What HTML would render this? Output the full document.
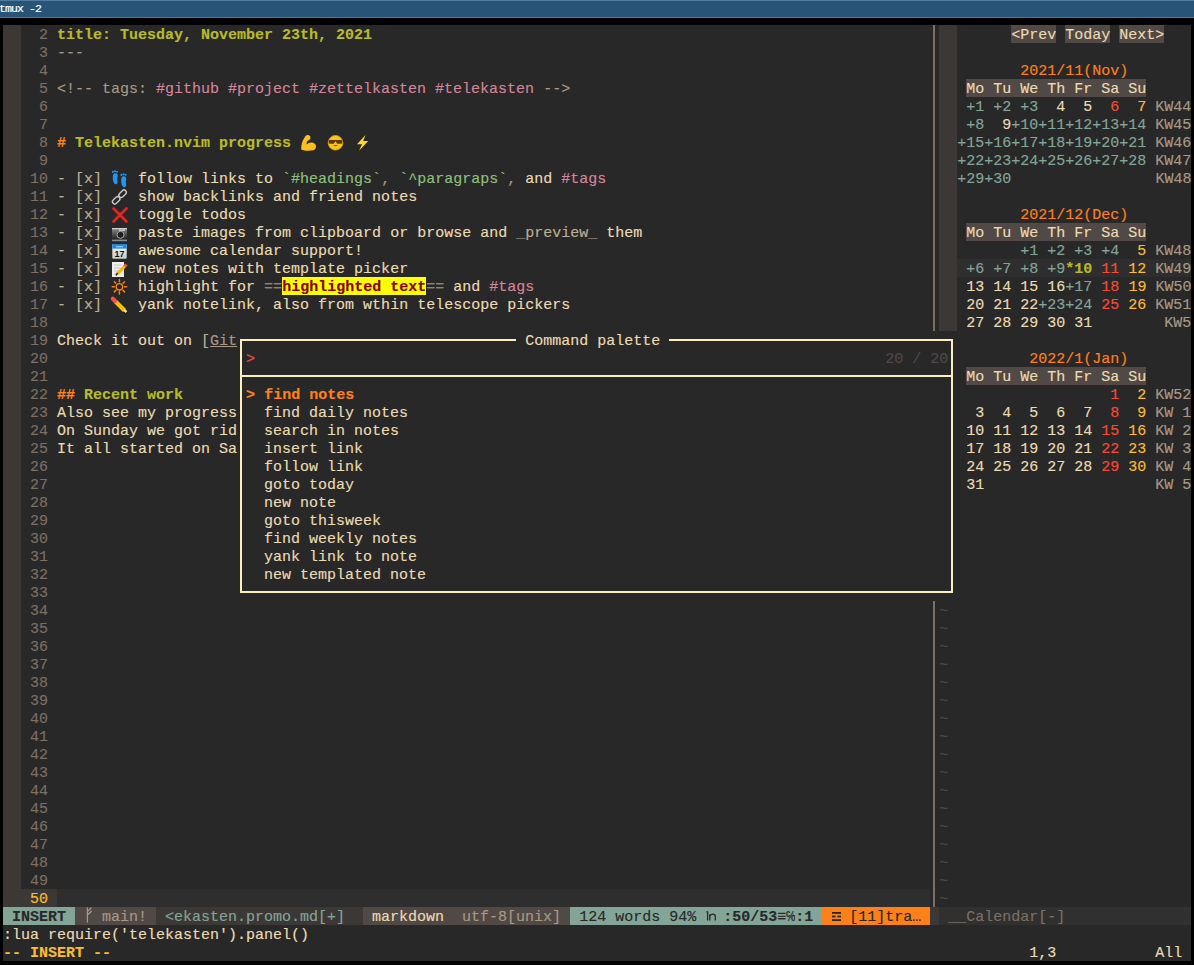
<!DOCTYPE html>
<html><head><meta charset="utf-8"><style>
html,body{margin:0;padding:0}
body{width:1194px;height:965px;background:#000;overflow:hidden;position:relative;font-family:"Liberation Mono",monospace}
#tb{position:absolute;left:0;top:0;width:1194px;height:18px;background:#285478;border-top:1px solid #4f7ba0;border-bottom:1px solid #4a77a0;box-sizing:border-box}
#tb span{position:absolute;left:-1px;top:1px;font:11.5px/14px "Liberation Mono",monospace;color:#fff;letter-spacing:-0.9px;-webkit-text-stroke:0.2px #fff}
#t{position:absolute;left:3px;top:25px;width:1188px;height:936px;background:#282828;color:#ebdbb2;font-size:15px;-webkit-text-stroke:0.15px currentColor}
.r{position:absolute;left:0;height:18px;line-height:22px;white-space:pre;width:1188px}
.r span{display:inline-block;height:18px;vertical-align:top}
.o{position:absolute}
</style></head><body>
<div id="tb"><span>tmux -2</span></div>
<div id="t">
<div class="r" style="top:0px"><span style="background:#3c3836">  </span><span style="color:#7c6f64">  2 </span><span style="color:#b8bb26;font-weight:bold">title: Tuesday, November 23th, 2021</span>                                                              <span style="color:#7c6f64"> </span><span style="background:#3c3836">  </span>      <span style="background:#504945">&lt;Prev</span> <span style="background:#504945">Today</span> <span style="background:#504945">Next&gt;</span>   </div>
<div class="r" style="top:18px"><span style="background:#3c3836">  </span><span style="color:#7c6f64">  3 </span><span style="color:#a89984">---</span>                                                                                              <span style="color:#7c6f64"> </span><span style="background:#3c3836">  </span>                          </div>
<div class="r" style="top:36px"><span style="background:#3c3836">  </span><span style="color:#7c6f64">  4 </span>                                                                                                 <span style="color:#7c6f64"> </span><span style="background:#3c3836">  </span>       <span style="color:#fe8019">2021/11(Nov)</span>       </div>
<div class="r" style="top:54px"><span style="background:#3c3836">  </span><span style="color:#7c6f64">  5 </span><span style="color:#a89984">&lt;!-- tags: </span><span style="color:#d3869b">#github #project #zettelkasten #telekasten</span><span style="color:#a89984"> --&gt;</span>                                        <span style="color:#7c6f64"> </span><span style="background:#3c3836">  </span> <span style="background:#504945">Mo Tu We Th Fr Sa Su</span>     </div>
<div class="r" style="top:72px"><span style="background:#3c3836">  </span><span style="color:#7c6f64">  6 </span>                                                                                                 <span style="color:#7c6f64"> </span><span style="background:#3c3836">  </span><span style="color:#83a598"> +1 +2 +3</span>  4  5<span style="color:#fb4934">  6</span><span style="color:#fabd2f">  7</span><span style="color:#a89984"> KW44</span></div>
<div class="r" style="top:90px"><span style="background:#3c3836">  </span><span style="color:#7c6f64">  7 </span>                                                                                                 <span style="color:#7c6f64"> </span><span style="background:#3c3836">  </span><span style="color:#83a598"> +8</span>  9<span style="color:#83a598">+10+11+12+13+14</span><span style="color:#a89984"> KW45</span></div>
<div class="r" style="top:108px"><span style="background:#3c3836">  </span><span style="color:#7c6f64">  8 </span><span style="color:#fe8019;font-weight:bold">#</span> <span style="color:#b8bb26;font-weight:bold">Telekasten.nvim progress</span>                                                                       <span style="color:#7c6f64"> </span><span style="background:#3c3836">  </span><span style="color:#83a598">+15+16+17+18+19+20+21</span><span style="color:#a89984"> KW46</span></div>
<div class="r" style="top:126px"><span style="background:#3c3836">  </span><span style="color:#7c6f64">  9 </span>                                                                                                 <span style="color:#7c6f64"> </span><span style="background:#3c3836">  </span><span style="color:#83a598">+22+23+24+25+26+27+28</span><span style="color:#a89984"> KW47</span></div>
<div class="r" style="top:144px"><span style="background:#3c3836">  </span><span style="color:#7c6f64"> 10 </span><span style="color:#bdae93">-</span> <span style="color:#bdae93">[x]</span>    follow links to <span style="color:#8ec07c">`#headings`</span><span style="color:#a89984">, </span><span style="color:#8ec07c">`^paragraps`</span><span style="color:#a89984">, </span>and <span style="color:#d3869b">#tags</span>                                    <span style="color:#7c6f64"> </span><span style="background:#3c3836">  </span><span style="color:#83a598">+29+30</span>               <span style="color:#a89984"> KW48</span></div>
<div class="r" style="top:162px"><span style="background:#3c3836">  </span><span style="color:#7c6f64"> 11 </span><span style="color:#bdae93">-</span> <span style="color:#bdae93">[x]</span>    show backlinks and friend notes                                                         <span style="color:#7c6f64"> </span><span style="background:#3c3836">  </span>                          </div>
<div class="r" style="top:180px"><span style="background:#3c3836">  </span><span style="color:#7c6f64"> 12 </span><span style="color:#bdae93">-</span> <span style="color:#bdae93">[x]</span>    toggle todos                                                                            <span style="color:#7c6f64"> </span><span style="background:#3c3836">  </span>       <span style="color:#fe8019">2021/12(Dec)</span>       </div>
<div class="r" style="top:198px"><span style="background:#3c3836">  </span><span style="color:#7c6f64"> 13 </span><span style="color:#bdae93">-</span> <span style="color:#bdae93">[x]</span>    paste images from clipboard or browse and <span style="color:#928374">_</span><span style="color:#bdae93">preview</span><span style="color:#928374">_</span> them                                <span style="color:#7c6f64"> </span><span style="background:#3c3836">  </span> <span style="background:#504945">Mo Tu We Th Fr Sa Su</span>     </div>
<div class="r" style="top:216px"><span style="background:#3c3836">  </span><span style="color:#7c6f64"> 14 </span><span style="color:#bdae93">-</span> <span style="color:#bdae93">[x]</span>    awesome calendar support!                                                               <span style="color:#7c6f64"> </span><span style="background:#3c3836">  </span>      <span style="color:#83a598"> +1 +2 +3 +4</span><span style="color:#fabd2f">  5</span><span style="color:#a89984"> KW48</span></div>
<div class="r" style="top:234px"><span style="background:#3c3836">  </span><span style="color:#7c6f64"> 15 </span><span style="color:#bdae93">-</span> <span style="color:#bdae93">[x]</span>    new notes with template picker                                                          <span style="color:#7c6f64"> </span><span style="background:#3c3836">  </span><span style="color:#83a598;background:#2e2e2e"> +6 +7 +8 +9</span><span style="color:#b8bb26;background:#2e2e2e;font-weight:bold">*10</span><span style="color:#fb4934;background:#2e2e2e"> 11</span><span style="color:#fabd2f;background:#2e2e2e"> 12</span><span style="color:#a89984;background:#2e2e2e"> KW49</span></div>
<div class="r" style="top:252px"><span style="background:#3c3836">  </span><span style="color:#7c6f64"> 16 </span><span style="color:#bdae93">-</span> <span style="color:#bdae93">[x]</span>    highlight for <span style="color:#928374">==</span><span style="color:#8b0000;background:#ffff00;font-weight:bold">highlighted text</span><span style="color:#928374">==</span> and <span style="color:#d3869b">#tags</span>                                            <span style="color:#7c6f64"> </span><span style="background:#3c3836">  </span> 13 14 15 16<span style="color:#83a598">+17</span><span style="color:#fb4934"> 18</span><span style="color:#fabd2f"> 19</span><span style="color:#a89984"> KW50</span></div>
<div class="r" style="top:270px"><span style="background:#3c3836">  </span><span style="color:#7c6f64"> 17 </span><span style="color:#bdae93">-</span> <span style="color:#bdae93">[x]</span>    yank notelink, also from wthin telescope pickers                                        <span style="color:#7c6f64"> </span><span style="background:#3c3836">  </span> 20 21 22<span style="color:#83a598">+23+24</span><span style="color:#fb4934"> 25</span><span style="color:#fabd2f"> 26</span><span style="color:#a89984"> KW51</span></div>
<div class="r" style="top:288px"><span style="background:#3c3836">  </span><span style="color:#7c6f64"> 18 </span>                                                                                                 <span style="color:#7c6f64"> </span><span style="background:#3c3836">  </span> 27 28 29 30 31       <span style="color:#a89984"> KW5</span></div>
<div class="r" style="top:306px"><span style="background:#3c3836">  </span><span style="color:#7c6f64"> 19 </span>Check it out on <span style="color:#bdae93">[</span><span style="color:#a89984;text-decoration:underline">Git</span>                                Command palette                                                           </div>
<div class="r" style="top:324px"><span style="background:#3c3836">  </span><span style="color:#7c6f64"> 20 </span>                     <span style="color:#fb4934">&gt;</span>                                                                      <span style="color:#504945">20 / 20</span>         <span style="color:#fe8019">2022/1(Jan)</span>       </div>
<div class="r" style="top:342px"><span style="background:#3c3836">  </span><span style="color:#7c6f64"> 21 </span>                                                                                                     <span style="background:#504945">Mo Tu We Th Fr Sa Su</span>     </div>
<div class="r" style="top:360px"><span style="background:#3c3836">  </span><span style="color:#7c6f64"> 22 </span><span style="color:#fe8019;font-weight:bold">##</span> <span style="color:#b8bb26;font-weight:bold">Recent work</span>       <span style="color:#fe8019;font-weight:bold">&gt;</span> <span style="color:#fe8019;font-weight:bold">find notes</span>                                                                                  <span style="color:#fb4934">  1</span><span style="color:#fabd2f">  2</span><span style="color:#a89984"> KW52</span></div>
<div class="r" style="top:378px"><span style="background:#3c3836">  </span><span style="color:#7c6f64"> 23 </span>Also see my progress   find daily notes                                                               3  4  5  6  7<span style="color:#fb4934">  8</span><span style="color:#fabd2f">  9</span><span style="color:#a89984"> KW 1</span></div>
<div class="r" style="top:396px"><span style="background:#3c3836">  </span><span style="color:#7c6f64"> 24 </span>On Sunday we got rid   search in notes                                                               10 11 12 13 14<span style="color:#fb4934"> 15</span><span style="color:#fabd2f"> 16</span><span style="color:#a89984"> KW 2</span></div>
<div class="r" style="top:414px"><span style="background:#3c3836">  </span><span style="color:#7c6f64"> 25 </span>It all started on Sa   insert link                                                                   17 18 19 20 21<span style="color:#fb4934"> 22</span><span style="color:#fabd2f"> 23</span><span style="color:#a89984"> KW 3</span></div>
<div class="r" style="top:432px"><span style="background:#3c3836">  </span><span style="color:#7c6f64"> 26 </span>                       follow link                                                                   24 25 26 27 28<span style="color:#fb4934"> 29</span><span style="color:#fabd2f"> 30</span><span style="color:#a89984"> KW 4</span></div>
<div class="r" style="top:450px"><span style="background:#3c3836">  </span><span style="color:#7c6f64"> 27 </span>                       goto today                                                                    31                  <span style="color:#a89984"> KW 5</span></div>
<div class="r" style="top:468px"><span style="background:#3c3836">  </span><span style="color:#7c6f64"> 28 </span>                       new note                                                                                               </div>
<div class="r" style="top:486px"><span style="background:#3c3836">  </span><span style="color:#7c6f64"> 29 </span>                       goto thisweek                                                                                          </div>
<div class="r" style="top:504px"><span style="background:#3c3836">  </span><span style="color:#7c6f64"> 30 </span>                       find weekly notes                                                                                      </div>
<div class="r" style="top:522px"><span style="background:#3c3836">  </span><span style="color:#7c6f64"> 31 </span>                       yank link to note                                                                                      </div>
<div class="r" style="top:540px"><span style="background:#3c3836">  </span><span style="color:#7c6f64"> 32 </span>                       new templated note                                                                                     </div>
<div class="r" style="top:558px"><span style="background:#3c3836">  </span><span style="color:#7c6f64"> 33 </span>                                                                                                                              </div>
<div class="r" style="top:576px"><span style="background:#3c3836">  </span><span style="color:#7c6f64"> 34 </span>                                                                                                 <span style="color:#7c6f64"> </span><span style="color:#504945">~</span>                           </div>
<div class="r" style="top:594px"><span style="background:#3c3836">  </span><span style="color:#7c6f64"> 35 </span>                                                                                                 <span style="color:#7c6f64"> </span><span style="color:#504945">~</span>                           </div>
<div class="r" style="top:612px"><span style="background:#3c3836">  </span><span style="color:#7c6f64"> 36 </span>                                                                                                 <span style="color:#7c6f64"> </span><span style="color:#504945">~</span>                           </div>
<div class="r" style="top:630px"><span style="background:#3c3836">  </span><span style="color:#7c6f64"> 37 </span>                                                                                                 <span style="color:#7c6f64"> </span><span style="color:#504945">~</span>                           </div>
<div class="r" style="top:648px"><span style="background:#3c3836">  </span><span style="color:#7c6f64"> 38 </span>                                                                                                 <span style="color:#7c6f64"> </span><span style="color:#504945">~</span>                           </div>
<div class="r" style="top:666px"><span style="background:#3c3836">  </span><span style="color:#7c6f64"> 39 </span>                                                                                                 <span style="color:#7c6f64"> </span><span style="color:#504945">~</span>                           </div>
<div class="r" style="top:684px"><span style="background:#3c3836">  </span><span style="color:#7c6f64"> 40 </span>                                                                                                 <span style="color:#7c6f64"> </span><span style="color:#504945">~</span>                           </div>
<div class="r" style="top:702px"><span style="background:#3c3836">  </span><span style="color:#7c6f64"> 41 </span>                                                                                                 <span style="color:#7c6f64"> </span><span style="color:#504945">~</span>                           </div>
<div class="r" style="top:720px"><span style="background:#3c3836">  </span><span style="color:#7c6f64"> 42 </span>                                                                                                 <span style="color:#7c6f64"> </span><span style="color:#504945">~</span>                           </div>
<div class="r" style="top:738px"><span style="background:#3c3836">  </span><span style="color:#7c6f64"> 43 </span>                                                                                                 <span style="color:#7c6f64"> </span><span style="color:#504945">~</span>                           </div>
<div class="r" style="top:756px"><span style="background:#3c3836">  </span><span style="color:#7c6f64"> 44 </span>                                                                                                 <span style="color:#7c6f64"> </span><span style="color:#504945">~</span>                           </div>
<div class="r" style="top:774px"><span style="background:#3c3836">  </span><span style="color:#7c6f64"> 45 </span>                                                                                                 <span style="color:#7c6f64"> </span><span style="color:#504945">~</span>                           </div>
<div class="r" style="top:792px"><span style="background:#3c3836">  </span><span style="color:#7c6f64"> 46 </span>                                                                                                 <span style="color:#7c6f64"> </span><span style="color:#504945">~</span>                           </div>
<div class="r" style="top:810px"><span style="background:#3c3836">  </span><span style="color:#7c6f64"> 47 </span>                                                                                                 <span style="color:#7c6f64"> </span><span style="color:#504945">~</span>                           </div>
<div class="r" style="top:828px"><span style="background:#3c3836">  </span><span style="color:#7c6f64"> 48 </span>                                                                                                 <span style="color:#7c6f64"> </span><span style="color:#504945">~</span>                           </div>
<div class="r" style="top:846px"><span style="background:#3c3836">  </span><span style="color:#7c6f64"> 49 </span>                                                                                                 <span style="color:#7c6f64"> </span><span style="color:#504945">~</span>                           </div>
<div class="r" style="top:864px"><span style="background:#3c3836">  </span><span style="color:#fabd2f;background:#3c3836"> 50 </span><span style="background:#2e2e2e">                                                                                                 </span><span style="color:#7c6f64"> </span><span style="color:#504945">~</span>                           </div>
<div class="r" style="top:882px"><span style="color:#282828;background:#83a598;font-weight:bold"> INSERT </span><span style="color:#a89984;background:#504945">   main! </span><span style="color:#83a598;background:#3c3836"> &lt;ekasten.promo.md[+]  </span><span style="background:#504945"> markdown  </span><span style="color:#a89984;background:#504945">utf-8[unix] </span><span style="color:#282828;background:#83a598"> 124 words 94%   </span><span style="color:#282828;background:#83a598;font-weight:bold">:50/53</span><span style="color:#282828;background:#83a598">≡℅</span><span style="color:#282828;background:#83a598;font-weight:bold">:1</span><span style="color:#282828;background:#83a598"> </span><span style="color:#282828;background:#fe8019">   [11]tra… </span><span style="background:#3c3836"> </span><span style="color:#7c6f64;background:#303030"> __Calendar[-]              </span></div>
<div class="r" style="top:900px">:lua require('telekasten').panel()                                                                                                  </div>
<div class="r" style="top:918px"><span style="color:#fabd2f;font-weight:bold">-- INSERT --</span>                                                                                                      1,3           All </div>
<div class="o" style="left:930px;top:0;width:2px;height:306px;background:#7c6f64"></div>
<div class="o" style="left:930px;top:576px;width:2px;height:306px;background:#7c6f64"></div>
<div class="o" style="left:237px;top:314px;width:276px;height:2px;background:#fbefc2"></div>
<div class="o" style="left:666px;top:314px;width:284px;height:2px;background:#fbefc2"></div>
<div class="o" style="left:237px;top:314px;width:2px;height:254px;background:#fbefc2"></div>
<div class="o" style="left:948px;top:314px;width:2px;height:254px;background:#fbefc2"></div>
<div class="o" style="left:237px;top:566px;width:713px;height:2px;background:#fbefc2"></div>
<div class="o" style="left:237px;top:350px;width:713px;height:2px;background:#fbefc2"></div>

<svg class="o" style="left:-3px;top:-25px" width="1194" height="965" viewBox="0 0 1194 965">
<!-- muscle -->
<path d="M301.2,149.5 C301,145 302.5,140 305,136.8 C306,135 308.5,134.6 309.8,135.8 C311,137 310.5,139.5 308.8,140.3 C307.5,140.8 306.8,141.5 306.6,143 L306.6,144.6 C308.5,142.2 312.5,141.8 314.8,143.8 C316.8,145.6 316.3,149.2 313.5,150.3 C310,151 304,151 301.2,149.5 Z" fill="#fbbf1f"/>
<!-- sunglasses face -->
<circle cx="335.5" cy="142.8" r="7.3" fill="#fac41e" stroke="#de9a0e" stroke-width="0.9"/>
<path d="M328.6,140 H342.4 L341.8,143.7 H337.2 L335.5,141.3 L333.8,143.7 H329.2 Z" fill="#5d3a05"/>
<path d="M333,145.2 Q335.5,147.4 338,145.2 Z" fill="#6d4410"/>
<!-- zap -->
<path d="M365.5,135 L357,144.3 L362,144.3 L359,150.8 L368.2,141 L363.2,141 Z" fill="#fdd835"/>
<!-- footprints -->
<path d="M113.2,174.5 C112.3,177.5 112.8,181.5 114.3,183.6 C115.6,185 117.6,184.2 117.6,182 C117.6,180.3 117,179 117.6,177 C118.2,175 117.5,173.3 115.5,173.2 C114.4,173.2 113.6,173.6 113.2,174.5 Z" fill="#2196f3"/>
<circle cx="112.9" cy="171.9" r="1.05" fill="#2196f3"/><circle cx="115" cy="171.2" r="1.05" fill="#2196f3"/><circle cx="117.1" cy="171.8" r="1.05" fill="#2196f3"/>
<path d="M121.5,177.5 C120.8,180.5 121.2,184.5 122.8,186.6 C124.1,188 126.1,187.2 126.1,185 C126.1,183.3 125.5,182 126.1,180 C126.7,178 126,176.3 124,176.2 C122.9,176.2 121.9,176.6 121.5,177.5 Z" fill="#2196f3"/>
<circle cx="121.4" cy="174.9" r="1.05" fill="#2196f3"/><circle cx="123.5" cy="174.2" r="1.05" fill="#2196f3"/><circle cx="125.6" cy="174.8" r="1.05" fill="#2196f3"/>
<!-- link -->
<rect x="120.3" y="189.4" width="4.6" height="8.6" rx="2.3" transform="rotate(45 122.6 193.7)" fill="none" stroke="#c8c8c8" stroke-width="1.4"/>
<rect x="113.9" y="196" width="4.6" height="8.6" rx="2.3" transform="rotate(45 116.2 200.3)" fill="none" stroke="#c8c8c8" stroke-width="1.4"/>
<!-- cross -->
<path d="M113.5,208.5 L126.5,221.5 M126.5,208.5 L113.5,221.5" stroke="#e8221f" stroke-width="2.7" stroke-linecap="round"/>
<!-- camera -->
<defs><linearGradient id="cg" x1="0" y1="0" x2="0" y2="1"><stop offset="0" stop-color="#8c8c8c"/><stop offset="1" stop-color="#262626"/></linearGradient>
<linearGradient id="pg" x1="0" y1="0" x2="0" y2="1"><stop offset="0" stop-color="#fafafa"/><stop offset="1" stop-color="#c9c9c9"/></linearGradient></defs>
<rect x="112" y="228" width="15" height="11" rx="0.8" fill="url(#cg)"/>
<rect x="112" y="228" width="15" height="1.2" fill="#d0d0d0"/>
<rect x="119" y="229.5" width="6" height="1.2" fill="#e0e0e0"/>
<circle cx="120.5" cy="234.8" r="3.5" fill="#1e1e1e" stroke="#a8a8a8" stroke-width="1"/>
<rect x="112" y="239.6" width="15" height="1.6" fill="#8c8c8c"/>
<!-- calendar -->
<rect x="112.3" y="244" width="14.4" height="14.8" rx="1.2" fill="url(#pg)"/>
<rect x="112.3" y="244" width="14.4" height="4.6" fill="#1e88e5"/>
<path d="M116,246.8h7" stroke="#bcdcf8" stroke-width="1"/>
<text x="119.6" y="257.2" font-family="Liberation Sans" font-weight="bold" font-size="9" text-anchor="middle" fill="#111" style="-webkit-text-stroke:0">17</text>
<!-- memo -->
<rect x="112" y="262" width="12" height="15" fill="#eeeeee"/>
<path d="M114,265h8M114,268h8M114,271h8M114,274h6" stroke="#bbb" stroke-width="0.8"/>
<path d="M117,274 L125.5,265.5" stroke="#ffb300" stroke-width="3"/>
<path d="M124.5,266.5 L126.5,264.5" stroke="#ef5350" stroke-width="3"/>
<path d="M116,275.5 L117.5,273" stroke="#333" stroke-width="1.5"/>
<!-- sun -->
<g stroke="#f5820f" stroke-linecap="round">
<circle cx="119.4" cy="286.8" r="3.2" fill="none" stroke-width="1.4"/>
<path d="M119.4,279.6v2.2 M119.4,291.8v2.2 M112.2,286.8h2.2 M124.4,286.8h2.2 M114.3,281.7l1.5,1.5 M123,290.4l1.5,1.5 M124.5,281.7l-1.5,1.5 M115.8,290.4l-1.5,1.5" stroke-width="1.5"/>
</g>
<!-- pencil -->
<path d="M115.5,301.5 L124.5,310.5" stroke="#ffc107" stroke-width="4.2"/>
<path d="M112.8,298.8 L115,301" stroke="#ef5350" stroke-width="4.2" stroke-linecap="round"/>
<path d="M124,310 L126.5,312" stroke="#ffe082" stroke-width="2.5"/>
<!-- status glyphs -->
<path d="M87.4,907.5v15 M87.4,911.5l4,-3.8 M87.4,915l4.3,-4" stroke="#a89984" stroke-width="1.2" fill="none"/>
<path d="M706.3,911.8h1.3v8.6 M709.8,914.2v6.3 M709.8,916q1.3,-1.9 3.1,-1.9q2.4,0 2.4,2.6v3.8" stroke="#282828" stroke-width="1.3" fill="none"/>
<rect x="832" y="912" width="9" height="1.8" fill="#282828"/>
<rect x="832" y="915.6" width="3.6" height="1.8" fill="#282828"/>
<rect x="837.4" y="915.6" width="3.6" height="1.8" fill="#282828"/>
<rect x="832" y="919.2" width="9" height="1.8" fill="#282828"/>
</svg>

</div>
</body></html>
